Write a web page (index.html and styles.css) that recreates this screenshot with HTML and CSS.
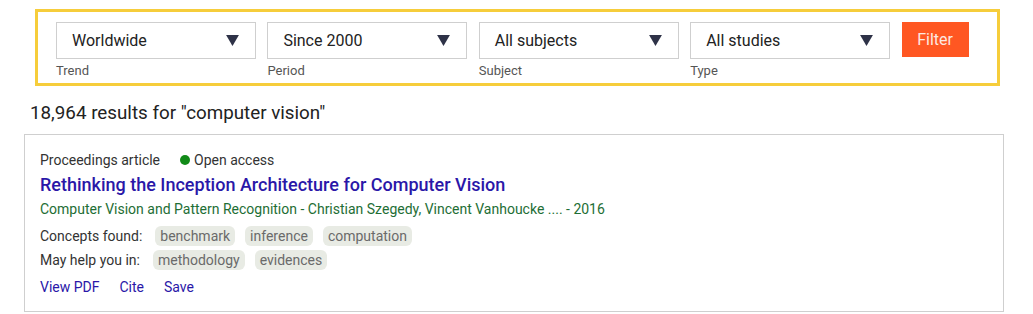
FILE: index.html
```html
<!DOCTYPE html>
<html>
<head>
<meta charset="utf-8">
<link rel="stylesheet" href="styles.css">
</head>
<body>
<div class="page">
  <form class="filters">
    <div class="field">
      <div class="select"><span>Worldwide</span><svg class="caret" viewBox="0 0 14 12"><path d="M0 0H14L7 12Z"/></svg></div>
      <div class="label">Trend</div>
    </div>
    <div class="field">
      <div class="select"><span>Since 2000</span><svg class="caret" viewBox="0 0 14 12"><path d="M0 0H14L7 12Z"/></svg></div>
      <div class="label">Period</div>
    </div>
    <div class="field">
      <div class="select"><span>All subjects</span><svg class="caret" viewBox="0 0 14 12"><path d="M0 0H14L7 12Z"/></svg></div>
      <div class="label">Subject</div>
    </div>
    <div class="field">
      <div class="select"><span>All studies</span><svg class="caret" viewBox="0 0 14 12"><path d="M0 0H14L7 12Z"/></svg></div>
      <div class="label">Type</div>
    </div>
    <button type="button" class="btn">Filter</button>
  </form>

  <h2 class="count">18,964 results for "computer vision"</h2>

  <div class="card">
    <div class="meta"><span>Proceedings article</span><span class="oa"><span class="dot"></span>Open access</span></div>
    <a class="title">Rethinking the Inception Architecture for Computer Vision</a>
    <div class="source">Computer Vision and Pattern Recognition - Christian Szegedy, Vincent Vanhoucke .... - 2016</div>
    <div class="row first"><span class="rlabel">Concepts found:</span><span class="chip">benchmark</span><span class="chip">inference</span><span class="chip">computation</span></div>
    <div class="row"><span class="rlabel">May help you in:</span><span class="chip">methodology</span><span class="chip">evidences</span></div>
    <div class="links"><a>View PDF</a><a>Cite</a><a>Save</a></div>
  </div>
</div>
</body>
</html>
```

FILE: styles.css
```css
* { box-sizing: border-box; }
html, body { margin: 0; padding: 0; background: #fff; }
body { font-family: Roboto, "Noto Sans", Arial, sans-serif; color: #222; }

.page { padding: 9px 0 0 24px; width: 1033px; }

.filters {
  margin-left: 11px;
  width: 965px;
  height: 77px;
  border: 3px solid #f6cd3b;
  padding: 10px 0 0 18px;
  display: flex;
  align-items: flex-start;
  gap: 11.4px;
}
.field { width: 200px; display: flex; flex-direction: column; }
.select {
  height: 37px;
  border: 1px solid #cfcfcf;
  display: flex;
  align-items: center;
  justify-content: space-between;
  padding: 0 16px 0 15px;
  font-size: 16px;
  color: #222;
}
.caret { width: 13px; height: 11px; fill: #2e3247; margin-top: -1px; }
.label { font-size: 13px; color: #555; margin-top: 4px; line-height: 16px; }
.btn {
  width: 67px;
  height: 35px;
  border: 0;
  background: #ff5722;
  color: #fde8e0;
  font-family: inherit;
  font-size: 16px;
  padding: 0;
}

.count {
  margin: 16px 0 0 6px;
  font-size: 18.8px;
  font-weight: 400;
  color: #222;
  line-height: 22px;
}

.card {
  margin-top: 10px;
  width: 980px;
  height: 178px;
  border: 1px solid #cfcfcf;
  padding: 15px 15px 0 15px;
  font-size: 14px;
}
.meta { display: flex; gap: 20px; line-height: 20px; color: #333; }
.oa { display: flex; align-items: center; }
.dot { width: 10px; height: 10px; border-radius: 50%; background: #118a18; margin-right: 4px; }
.title {
  display: block;
  margin-top: 4px;
  font-size: 18px;
  font-weight: 500;
  color: #2a17a8;
  line-height: 22px;
}
.source { color: #1e6e35; line-height: 20px; margin-top: 3px; }
.row { display: flex; align-items: center; line-height: 20px; margin-top: 4px; color: #333; }
.row.first { margin-top: 7px; }
.rlabel { margin-right: 13px; }
.chip {
  background: #e8ebe4;
  color: #6a6a6a;
  border-radius: 6px;
  padding: 0 5px;
  margin-right: 10px;
  line-height: 20px;
}
.links { display: flex; gap: 20px; margin-top: 7px; line-height: 20px; }
.links a { color: #2a17a8; }
```
